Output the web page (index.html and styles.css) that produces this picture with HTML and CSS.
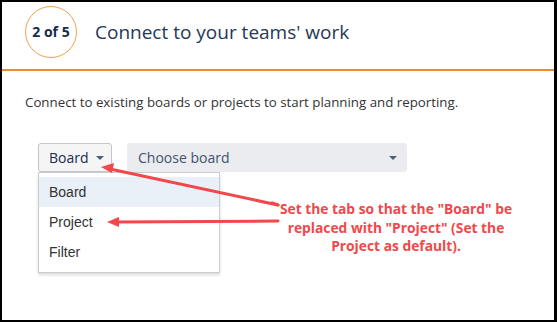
FILE: index.html
```html
<!DOCTYPE html>
<html lang="en">
<head>
    <meta charset="UTF-8">
    <title>Connect to your teams' work</title>
    <link rel="stylesheet" href="styles.css">
</head>
<body>
    <div class="frame">
        <div class="header">
            <div class="step">2 of 5</div>
            <h1>Connect to your teams' work</h1>
        </div>

        <div class="content">
            <p class="intro">Connect to existing boards or projects to start planning and reporting.</p>

            <div class="pickers">
                <div class="type-picker">
                    <button class="type-btn">Board <span class="caret"></span></button>
                    <ul class="type-menu">
                        <li class="active">Board</li>
                        <li>Project</li>
                        <li>Filter</li>
                    </ul>
                </div>
                <button class="choose">Choose board <span class="caret"></span></button>
            </div>
        </div>

        <div class="note">Set the tab so that the "Board" be<br>replaced with "Project" (Set the<br>Project as default).</div>

        <svg class="arrows" width="557" height="322" viewBox="0 0 557 322">
            <g stroke="#f2474b" stroke-width="3" fill="none" stroke-linecap="round">
                <line x1="278" y1="205" x2="110" y2="169"/>
                <line x1="278" y1="221" x2="116" y2="222"/>
                <line x1="278" y1="205" x2="272" y2="203"/>
            </g>
            <g fill="#f2474b">
                <polygon points="101,167 114,163 112,173"/>
                <polygon points="107,222 119,217 119,227"/>
            </g>
        </svg>
    </div>
</body>
</html>
```

FILE: styles.css
```css
body {
    margin: 0;
    font-family: 'Open Sans', sans-serif;
    background-color: #fff;
}

.frame {
    position: relative;
    width: 557px;
    height: 322px;
    box-sizing: border-box;
    border-style: solid;
    border-color: #000;
    border-width: 2px 3px 2px 2px;
    overflow: hidden;
}

.header {
    display: flex;
    align-items: center;
    gap: 18px;
    height: 67px;
    padding: 0 0 0 23px;
    border-bottom: 2px solid #f0892f;
}

.step {
    width: 50px;
    height: 50px;
    margin-top: -8px;
    border: 1px solid #f5a050;
    border-radius: 50%;
    display: flex;
    align-items: center;
    justify-content: center;
    font-size: 14px;
    font-weight: bold;
    color: #172b4d;
}

h1 {
    margin: -8px 0 0 0;
    font-size: 19px;
    font-weight: normal;
    color: #253858;
}

.content {
    padding: 0 0 0 23px;
}

.intro {
    margin: 22px 0 0 0;
    font-size: 13.3px;
    color: #333;
}

.pickers {
    display: flex;
    gap: 15px;
    margin: 32px 0 0 13px;
}

.type-picker {
    position: relative;
}

.type-btn,
.choose {
    height: 29px;
    box-sizing: border-box;
    font-family: 'Open Sans', sans-serif;
    font-size: 14px;
    border-radius: 3px;
    display: flex;
    align-items: center;
    padding: 0 10px;
}

.type-btn {
    width: 74px;
    background-color: #f5f5f5;
    border: 1px solid #c1c7d0;
    color: #172b4d;
    gap: 7px;
}

.choose {
    width: 280px;
    background-color: #ebecf0;
    border: none;
    color: #42526e;
    justify-content: space-between;
    padding: 0 10px 0 11px;
}

.caret {
    width: 0;
    height: 0;
    border-left: 4px solid transparent;
    border-right: 4px solid transparent;
    border-top: 4px solid #505f79;
}

.type-menu {
    position: absolute;
    top: 29px;
    left: 0;
    width: 182px;
    margin: 0;
    padding: 4px 0 5px 0;
    list-style: none;
    background-color: #fff;
    border: 1px solid #ccc;
    box-shadow: 0 2px 3px rgba(0, 0, 0, 0.15);
    box-sizing: border-box;
    font-family: 'Liberation Sans', Arial, sans-serif;
    font-size: 14px;
    color: #333;
}

.type-menu li {
    height: 30px;
    line-height: 30px;
    padding-left: 10px;
}

.type-menu .active {
    background-color: #eaf0f8;
}

.note {
    position: absolute;
    left: 264px;
    top: 198px;
    width: 260px;
    text-align: center;
    font-size: 13.8px;
    line-height: 18.5px;
    font-weight: bold;
    color: #f2474b;
}

.arrows {
    position: absolute;
    left: -2px;
    top: -2px;
    pointer-events: none;
}
```
